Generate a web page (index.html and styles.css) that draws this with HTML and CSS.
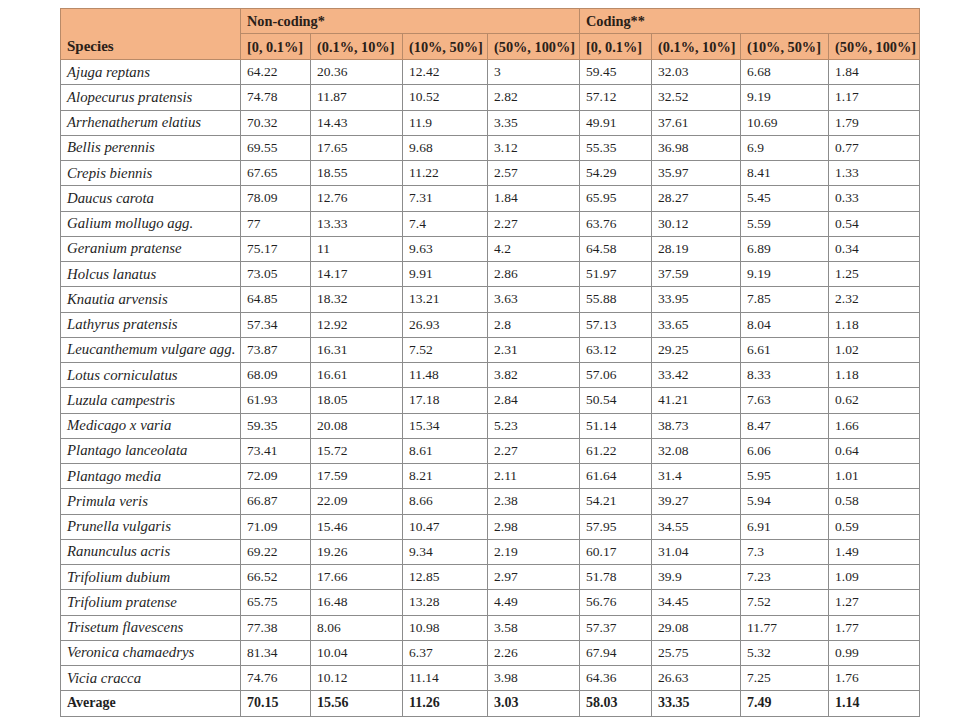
FILE: index.html
```html
<!DOCTYPE html>
<html>
<head>
<meta charset="utf-8">
<link rel="stylesheet" href="styles.css">
</head>
<body>
<table class="data">
  <colgroup>
    <col class="c-species"><col class="c1"><col class="c2"><col class="c3"><col class="c4"><col class="c5"><col class="c6"><col class="c7"><col class="c8">
  </colgroup>
  <thead>
    <tr class="h1">
      <th rowspan="2" class="sp">Species</th>
      <th colspan="4">Non-coding*</th>
      <th colspan="4">Coding**</th>
    </tr>
    <tr class="h2">
      <th>[0, 0.1%]</th><th>(0.1%, 10%]</th><th>(10%, 50%]</th><th>(50%, 100%]</th>
      <th>[0, 0.1%]</th><th>(0.1%, 10%]</th><th>(10%, 50%]</th><th>(50%, 100%]</th>
    </tr>
  </thead>
  <tbody>
    <tr><td><i>Ajuga reptans</i></td><td>64.22</td><td>20.36</td><td>12.42</td><td>3</td><td>59.45</td><td>32.03</td><td>6.68</td><td>1.84</td></tr>
    <tr><td><i>Alopecurus pratensis</i></td><td>74.78</td><td>11.87</td><td>10.52</td><td>2.82</td><td>57.12</td><td>32.52</td><td>9.19</td><td>1.17</td></tr>
    <tr><td><i>Arrhenatherum elatius</i></td><td>70.32</td><td>14.43</td><td>11.9</td><td>3.35</td><td>49.91</td><td>37.61</td><td>10.69</td><td>1.79</td></tr>
    <tr><td><i>Bellis perennis</i></td><td>69.55</td><td>17.65</td><td>9.68</td><td>3.12</td><td>55.35</td><td>36.98</td><td>6.9</td><td>0.77</td></tr>
    <tr><td><i>Crepis biennis</i></td><td>67.65</td><td>18.55</td><td>11.22</td><td>2.57</td><td>54.29</td><td>35.97</td><td>8.41</td><td>1.33</td></tr>
    <tr><td><i>Daucus carota</i></td><td>78.09</td><td>12.76</td><td>7.31</td><td>1.84</td><td>65.95</td><td>28.27</td><td>5.45</td><td>0.33</td></tr>
    <tr><td><i>Galium mollugo agg.</i></td><td>77</td><td>13.33</td><td>7.4</td><td>2.27</td><td>63.76</td><td>30.12</td><td>5.59</td><td>0.54</td></tr>
    <tr><td><i>Geranium pratense</i></td><td>75.17</td><td>11</td><td>9.63</td><td>4.2</td><td>64.58</td><td>28.19</td><td>6.89</td><td>0.34</td></tr>
    <tr><td><i>Holcus lanatus</i></td><td>73.05</td><td>14.17</td><td>9.91</td><td>2.86</td><td>51.97</td><td>37.59</td><td>9.19</td><td>1.25</td></tr>
    <tr><td><i>Knautia arvensis</i></td><td>64.85</td><td>18.32</td><td>13.21</td><td>3.63</td><td>55.88</td><td>33.95</td><td>7.85</td><td>2.32</td></tr>
    <tr><td><i>Lathyrus pratensis</i></td><td>57.34</td><td>12.92</td><td>26.93</td><td>2.8</td><td>57.13</td><td>33.65</td><td>8.04</td><td>1.18</td></tr>
    <tr><td><i>Leucanthemum vulgare agg.</i></td><td>73.87</td><td>16.31</td><td>7.52</td><td>2.31</td><td>63.12</td><td>29.25</td><td>6.61</td><td>1.02</td></tr>
    <tr><td><i>Lotus corniculatus</i></td><td>68.09</td><td>16.61</td><td>11.48</td><td>3.82</td><td>57.06</td><td>33.42</td><td>8.33</td><td>1.18</td></tr>
    <tr><td><i>Luzula campestris</i></td><td>61.93</td><td>18.05</td><td>17.18</td><td>2.84</td><td>50.54</td><td>41.21</td><td>7.63</td><td>0.62</td></tr>
    <tr><td><i>Medicago x varia</i></td><td>59.35</td><td>20.08</td><td>15.34</td><td>5.23</td><td>51.14</td><td>38.73</td><td>8.47</td><td>1.66</td></tr>
    <tr><td><i>Plantago lanceolata</i></td><td>73.41</td><td>15.72</td><td>8.61</td><td>2.27</td><td>61.22</td><td>32.08</td><td>6.06</td><td>0.64</td></tr>
    <tr><td><i>Plantago media</i></td><td>72.09</td><td>17.59</td><td>8.21</td><td>2.11</td><td>61.64</td><td>31.4</td><td>5.95</td><td>1.01</td></tr>
    <tr><td><i>Primula veris</i></td><td>66.87</td><td>22.09</td><td>8.66</td><td>2.38</td><td>54.21</td><td>39.27</td><td>5.94</td><td>0.58</td></tr>
    <tr><td><i>Prunella vulgaris</i></td><td>71.09</td><td>15.46</td><td>10.47</td><td>2.98</td><td>57.95</td><td>34.55</td><td>6.91</td><td>0.59</td></tr>
    <tr><td><i>Ranunculus acris</i></td><td>69.22</td><td>19.26</td><td>9.34</td><td>2.19</td><td>60.17</td><td>31.04</td><td>7.3</td><td>1.49</td></tr>
    <tr><td><i>Trifolium dubium</i></td><td>66.52</td><td>17.66</td><td>12.85</td><td>2.97</td><td>51.78</td><td>39.9</td><td>7.23</td><td>1.09</td></tr>
    <tr><td><i>Trifolium pratense</i></td><td>65.75</td><td>16.48</td><td>13.28</td><td>4.49</td><td>56.76</td><td>34.45</td><td>7.52</td><td>1.27</td></tr>
    <tr><td><i>Trisetum flavescens</i></td><td>77.38</td><td>8.06</td><td>10.98</td><td>3.58</td><td>57.37</td><td>29.08</td><td>11.77</td><td>1.77</td></tr>
    <tr><td><i>Veronica chamaedrys</i></td><td>81.34</td><td>10.04</td><td>6.37</td><td>2.26</td><td>67.94</td><td>25.75</td><td>5.32</td><td>0.99</td></tr>
    <tr><td><i>Vicia cracca</i></td><td>74.76</td><td>10.12</td><td>11.14</td><td>3.98</td><td>64.36</td><td>26.63</td><td>7.25</td><td>1.76</td></tr>
    <tr class="avg"><td>Average</td><td>70.15</td><td>15.56</td><td>11.26</td><td>3.03</td><td>58.03</td><td>33.35</td><td>7.49</td><td>1.14</td></tr>
  </tbody>
</table>
</body>
</html>
```
FILE: styles.css
```css
html, body {
  margin: 0;
  padding: 0;
  background: #ffffff;
}
body {
  padding: 8px 0 0 60px;
  font-family: "Liberation Serif", "Times New Roman", serif;
  color: #1f1f1f;
}
.data {
  border-collapse: collapse;
  table-layout: fixed;
  width: 859px;
  font-size: 13.5px;
  line-height: 16px;
}
.c-species { width: 180px; }
.c1 { width: 70px; }
.c2 { width: 92px; }
.c3 { width: 85px; }
.c4 { width: 92px; }
.c5 { width: 72px; }
.c6 { width: 89px; }
.c7 { width: 88px; }
.c8 { width: 91px; }

.data th, .data td {
  border: 1px solid #8c8c8c;
  padding: 0 0 0 6px;
  text-align: left;
  white-space: nowrap;
  overflow: hidden;
}
.data thead th {
  background: #f4b487;
  border-color: #b98a68;
  font-weight: bold;
  font-size: 14.3px;
  color: #2a2018;
}
.h1 th { height: 24px; vertical-align: middle; }
.h2 th { height: 25px; vertical-align: middle; }
.data thead th.sp { vertical-align: bottom; padding-bottom: 5px; font-size: 15px; }
.data tbody td {
  height: 24.25px;
  vertical-align: middle;
}
.data tbody td i { font-style: italic; font-size: 14.8px; }
.avg td { font-weight: bold; font-size: 14px; }
```
